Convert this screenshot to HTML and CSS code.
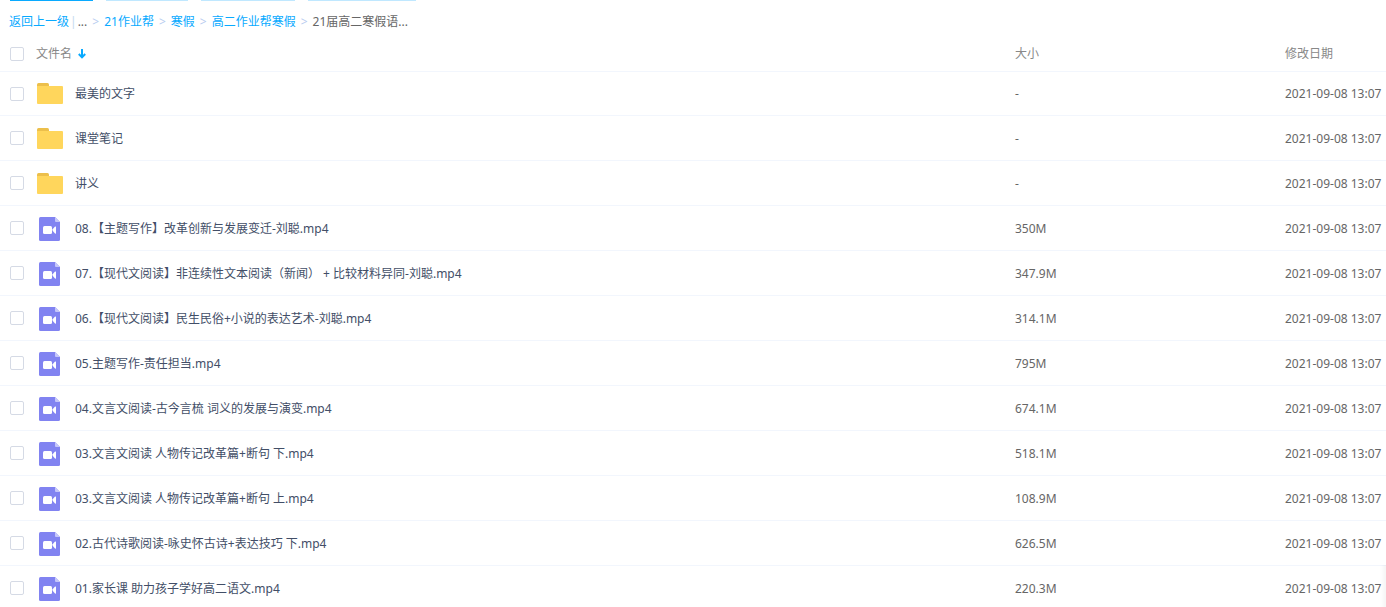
FILE: index.html
```html
<!DOCTYPE html>
<html lang="zh-CN">
<head>
<meta charset="utf-8">
<title>21届高二寒假语文</title>
<link rel="stylesheet" href="styles.css">
</head>
<body>
<svg class="symbols" aria-hidden="true">
  <symbol id="folder" viewBox="0 0 26 21">
    <path fill="#ecbf4b" d="M0 4V1.5Q0 0 1.5 0H10.5Q12 0 12 1.5V4Z"/>
    <path fill="#ffd65c" d="M0 3H25Q26 3 26 4V20Q26 21 25 21H1Q0 21 0 20Z"/>
  </symbol>
  <symbol id="video" viewBox="0 0 21 24">
    <path fill="#8183f1" d="M1.5 0H16L21 5V22.5Q21 24 19.5 24H1.5Q0 24 0 22.5V1.5Q0 0 1.5 0Z"/>
    <path fill="#c6c7fa" d="M16 0L21 5H17Q16 5 16 4Z"/>
    <rect x="4" y="9" width="9" height="8" rx="1.5" fill="#fff"/>
    <path fill="#fff" d="M13.6 12.2L16 9.6Q17 9 17 10V16Q17 17 16 16.4L13.6 13.8Z"/>
  </symbol>
</svg>
<div class="toolbar">
  <span class="tool tool-primary"></span><span class="tool tool-small"></span><span class="tool tool-medium"></span><span class="tool tool-large"></span>
</div>
<nav class="crumbs" aria-label="路径">
  <a href="#">返回上一级</a><span class="bar">|</span><span>...</span><span class="sep">&gt;</span><a href="#">21作业帮</a><span class="sep">&gt;</span><a href="#">寒假</a><span class="sep">&gt;</span><a href="#">高二作业帮寒假</a><span class="sep">&gt;</span><span>21届高二寒假语...</span>
</nav>
<table class="files">
  <colgroup><col class="col-check"><col class="col-icon"><col><col class="col-size"><col class="col-date"></colgroup>
  <thead>
    <tr>
      <th><input type="checkbox" aria-label="全选"></th>
      <th colspan="2"><span class="sort">文件名<svg class="arrow" viewBox="0 0 8 10" aria-hidden="true"><path d="M4 0V8M0.8 5L4 8.4L7.2 5" fill="none" stroke="#09aaff" stroke-width="2"/></svg></span></th>
      <th>大小</th>
      <th>修改日期</th>
    </tr>
  </thead>
  <tbody>
    <tr><td><input type="checkbox" id="f1"></td><td><svg class="folder"><use href="#folder"/></svg></td><td class="name"><label for="f1">最美的文字</label></td><td class="meta">-</td><td class="meta">2021-09-08 13:07</td></tr>
    <tr><td><input type="checkbox" id="f2"></td><td><svg class="folder"><use href="#folder"/></svg></td><td class="name"><label for="f2">课堂笔记</label></td><td class="meta">-</td><td class="meta">2021-09-08 13:07</td></tr>
    <tr><td><input type="checkbox" id="f3"></td><td><svg class="folder"><use href="#folder"/></svg></td><td class="name"><label for="f3">讲义</label></td><td class="meta">-</td><td class="meta">2021-09-08 13:07</td></tr>
    <tr><td><input type="checkbox" id="f4"></td><td><svg class="video"><use href="#video"/></svg></td><td class="name"><label for="f4">08.【主题写作】改革创新与发展变迁-刘聪.mp4</label></td><td class="meta">350M</td><td class="meta">2021-09-08 13:07</td></tr>
    <tr><td><input type="checkbox" id="f5"></td><td><svg class="video"><use href="#video"/></svg></td><td class="name"><label for="f5">07.【现代文阅读】非连续性文本阅读（新闻） + 比较材料异同-刘聪.mp4</label></td><td class="meta">347.9M</td><td class="meta">2021-09-08 13:07</td></tr>
    <tr><td><input type="checkbox" id="f6"></td><td><svg class="video"><use href="#video"/></svg></td><td class="name"><label for="f6">06.【现代文阅读】民生民俗+小说的表达艺术-刘聪.mp4</label></td><td class="meta">314.1M</td><td class="meta">2021-09-08 13:07</td></tr>
    <tr><td><input type="checkbox" id="f7"></td><td><svg class="video"><use href="#video"/></svg></td><td class="name"><label for="f7">05.主题写作-责任担当.mp4</label></td><td class="meta">795M</td><td class="meta">2021-09-08 13:07</td></tr>
    <tr><td><input type="checkbox" id="f8"></td><td><svg class="video"><use href="#video"/></svg></td><td class="name"><label for="f8">04.文言文阅读-古今言梳 词义的发展与演变.mp4</label></td><td class="meta">674.1M</td><td class="meta">2021-09-08 13:07</td></tr>
    <tr><td><input type="checkbox" id="f9"></td><td><svg class="video"><use href="#video"/></svg></td><td class="name"><label for="f9">03.文言文阅读 人物传记改革篇+断句 下.mp4</label></td><td class="meta">518.1M</td><td class="meta">2021-09-08 13:07</td></tr>
    <tr><td><input type="checkbox" id="f10"></td><td><svg class="video"><use href="#video"/></svg></td><td class="name"><label for="f10">03.文言文阅读 人物传记改革篇+断句 上.mp4</label></td><td class="meta">108.9M</td><td class="meta">2021-09-08 13:07</td></tr>
    <tr><td><input type="checkbox" id="f11"></td><td><svg class="video"><use href="#video"/></svg></td><td class="name"><label for="f11">02.古代诗歌阅读-咏史怀古诗+表达技巧 下.mp4</label></td><td class="meta">626.5M</td><td class="meta">2021-09-08 13:07</td></tr>
    <tr><td><input type="checkbox" id="f12"></td><td><svg class="video"><use href="#video"/></svg></td><td class="name"><label for="f12">01.家长课 助力孩子学好高二语文.mp4</label></td><td class="meta">220.3M</td><td class="meta">2021-09-08 13:07</td></tr>
  </tbody>
</table>
<div class="edge" aria-hidden="true"></div>
</body>
</html>
```
FILE: styles.css
```css
* { box-sizing: border-box; }
body {
  margin: 0;
  background: #fff;
  color: #424e67;
  font: 12px/18px "Noto Sans", "Noto Sans CJK SC", sans-serif;
  overflow: hidden;
}
.symbols { display: none; }
.toolbar { display: flex; gap: 13px; padding-left: 10px; }
.tool { height: 1px; background: #c0e8ff; }
.tool-primary { width: 83px; background: #09aaff; }
.tool-small { width: 82px; }
.tool-medium { width: 94px; }
.tool-large { width: 108px; }
.crumbs {
  display: flex;
  padding: 12px 9px 4px;
  color: #666;
  white-space: nowrap;
}
.crumbs a { color: #09aaff; text-decoration: none; }
.bar { margin: 0 1px; color: #c3d9ee; }
.sep { margin: 0 5px; color: #b8cdf0; }
.files {
  width: 100%;
  table-layout: fixed;
  border-spacing: 0;
}
.col-check { width: 36px; }
.col-icon { width: 39px; }
.col-size { width: 270px; }
.col-date { width: 101px; }
th, td { padding: 0; text-align: left; white-space: nowrap; }
th { height: 36px; padding-top: 1px; font-weight: 400; color: #888; }
td { height: 45px; border-bottom: 1px solid #f2f6fd; }
tbody tr:first-child td { border-top: 1px solid #f2f6fd; }
.name, .meta { padding-top: 1px; }
.meta { color: #666; }
input {
  display: block;
  appearance: none;
  width: 14px;
  height: 14px;
  margin: 0 0 0 10px;
  border: 1px solid #d5dae5;
  border-radius: 2px;
  background: #fff;
}
input:checked { background: #09aaff; }
.folder { display: block; width: 26px; height: 21px; margin-left: 1px; }
.video { display: block; width: 21px; height: 24px; margin: 2px 0 0 3px; }
.sort { display: flex; align-items: center; gap: 6px; }
.arrow { width: 8px; height: 10px; }
.edge {
  position: fixed;
  right: 0;
  bottom: 0;
  width: 6px;
  height: 42px;
  background: linear-gradient(to right, transparent, rgba(0, 0, 0, 0.04));
}
```
